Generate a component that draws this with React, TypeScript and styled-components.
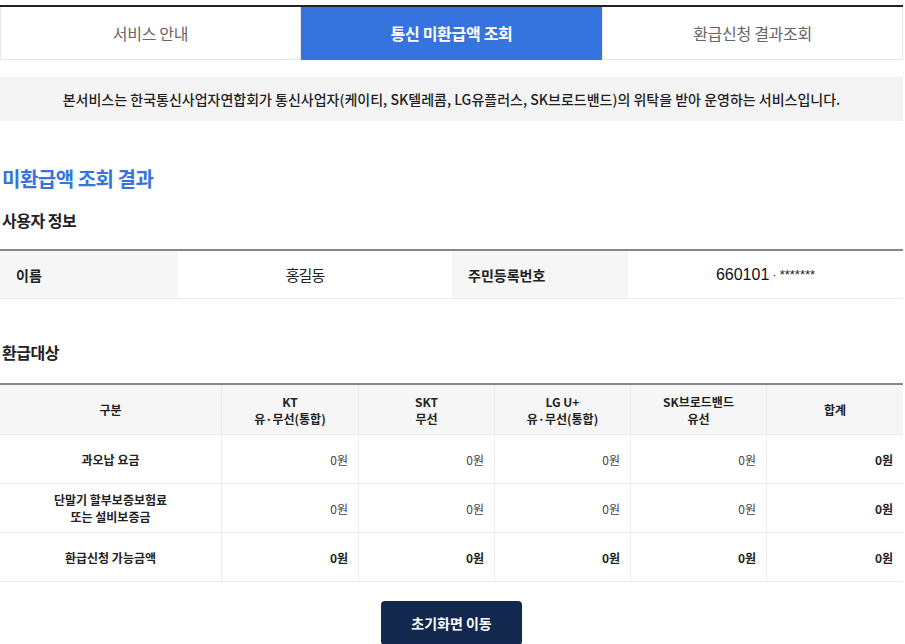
import styled, { createGlobalStyle } from "styled-components";

const GlobalStyle = createGlobalStyle`
  body {
    margin: 0;
    background: #fff;
    font-family: "Noto Sans CJK KR", "Noto Sans", sans-serif;
    color: #222;
  }
`;

const Page = styled.div`
  width: 903px;
  padding-top: 5px;
`;

const TabBar = styled.div`
  display: flex;
  border-top: 2px solid #222;
`;

type ITab = { active?: boolean };
const Tab = styled.div<ITab>`
  flex: 1;
  height: 53px;
  display: flex;
  align-items: center;
  justify-content: center;
  box-sizing: border-box;
  font-size: 16px;
  letter-spacing: -0.3px;
  font-weight: ${(p) => (p.active ? 700 : 400)};
  color: ${(p) => (p.active ? "#fff" : "#666")};
  background: ${(p) => (p.active ? "#3574df" : "#fff")};
  border: 1px solid ${(p) => (p.active ? "#3574df" : "#e6e6e6")};
  border-top: none;
`;

const Notice = styled.div`
  margin-top: 17px;
  height: 44px;
  background: #f4f4f4;
  display: flex;
  align-items: center;
  justify-content: center;
  font-size: 14px;
  font-weight: 500;
  color: #222;
`;

const Title = styled.h2`
  margin: 43px 0 0 2px;
  font-size: 20px;
  font-weight: 700;
  color: #3574df;
  letter-spacing: -0.5px;
`;

type ISub = { gap: number };
const SubTitle = styled.h3<ISub>`
  margin: ${(p) => p.gap}px 0 0 2px;
  font-size: 16px;
  font-weight: 700;
  color: #222;
  letter-spacing: -0.5px;
`;

const InfoTable = styled.div`
  margin-top: 17px;
  display: grid;
  grid-template-columns: 178px 274px 176px 1fr;
  height: 47px;
  border-top: 2px solid #888;
  border-bottom: 1px solid #ececec;
`;

type ICell = { head?: boolean };
const InfoCell = styled.div<ICell>`
  display: flex;
  align-items: center;
  justify-content: ${(p) => (p.head ? "flex-start" : "center")};
  padding-left: ${(p) => (p.head ? "16px" : "0")};
  background: ${(p) => (p.head ? "#f6f6f6" : "#fff")};
  font-size: ${(p) => (p.head ? "14px" : "15px")};
  letter-spacing: ${(p) => (p.head ? "0" : "-1px")};
  font-weight: ${(p) => (p.head ? 700 : 400)};
  color: #222;
`;

const Name = styled.span`
  margin-right: 20px;
`;

const IdNumber = styled.span`
  font-family: "Liberation Sans", Arial, sans-serif;
  font-size: 16px;
  letter-spacing: 0;
  color: #111;
`;

const Stars = styled.span`
  font-family: "Liberation Sans", Arial, sans-serif;
  font-size: 13px;
  letter-spacing: 0;
  margin-left: 3px;
`;

const Table = styled.div`
  margin-top: 19px;
  display: grid;
  grid-template-columns: 222px 137px 136px 136px 136px 1fr;
  border-top: 2px solid #888;
`;

type ITd = { head?: boolean; align?: "center" | "right"; bold?: boolean; last?: boolean };
const Td = styled.div<ITd>`
  height: ${(p) => (p.head ? "50px" : "49px")};
  box-sizing: border-box;
  display: flex;
  align-items: center;
  justify-content: ${(p) => (p.align === "right" ? "flex-end" : "center")};
  text-align: center;
  padding-right: ${(p) => (p.align === "right" ? "10px" : "0")};
  background: ${(p) => (p.head ? "#f6f6f6" : "#fff")};
  border-bottom: 1px solid #ececec;
  border-right: ${(p) => (p.last ? "none" : "1px solid #ececec")};
  font-size: 12px;
  line-height: 17px;
  font-weight: ${(p) => (p.bold ? 700 : 400)};
  color: ${(p) => (p.bold ? "#222" : "#444")};
`;

const ButtonRow = styled.div`
  display: flex;
  justify-content: center;
  margin-top: 19px;
`;

const Button = styled.button`
  width: 141px;
  height: 44px;
  border: none;
  border-radius: 4px;
  background: #13284f;
  color: #fff;
  font-family: "Noto Sans CJK KR", sans-serif;
  font-size: 14px;
  font-weight: 700;
`;

const providers = ["KT\n유·무선(통합)", "SKT\n무선", "LG U+\n유·무선(통합)", "SK브로드밴드\n유선"];
const rows = [
  { label: "과오납 요금", total: false },
  { label: "단말기 할부보증보험료\n또는 설비보증금", total: false },
  { label: "환급신청 가능금액", total: true },
];

const Lines = ({ text }: { text: string }) => (
  <span>
    {text.split("\n").map((t, i) => (
      <div key={i}>{t}</div>
    ))}
  </span>
);

const App = () => {
  return (
    <Page>
      <GlobalStyle />
      <TabBar>
        <Tab>서비스 안내</Tab>
        <Tab active>통신 미환급액 조회</Tab>
        <Tab>환급신청 결과조회</Tab>
      </TabBar>
      <Notice>
        본서비스는 한국통신사업자연합회가 통신사업자(케이티, SK텔레콤, LG유플러스, SK브로드밴드)의 위탁을 받아 운영하는 서비스입니다.
      </Notice>
      <Title>미환급액 조회 결과</Title>
      <SubTitle gap={15}>사용자 정보</SubTitle>
      <InfoTable>
        <InfoCell head>이름</InfoCell>
        <InfoCell>
          <Name>홍길동</Name>
        </InfoCell>
        <InfoCell head>주민등록번호</InfoCell>
        <InfoCell>
          <IdNumber>660101</IdNumber>
          <Stars>·</Stars>
          <Stars>*******</Stars>
        </InfoCell>
      </InfoTable>
      <SubTitle gap={41}>환급대상</SubTitle>
      <Table>
        <Td head bold>
          구분
        </Td>
        {providers.map((p) => (
          <Td key={p} head bold>
            <Lines text={p} />
          </Td>
        ))}
        <Td head bold last>
          합계
        </Td>
        {rows.map((r) => (
          <>
            <Td key={r.label} bold>
              <Lines text={r.label} />
            </Td>
            {providers.map((p) => (
              <Td key={r.label + p} align="right" bold={r.total}>
                0원
              </Td>
            ))}
            <Td align="right" bold last>
              0원
            </Td>
          </>
        ))}
      </Table>
      <ButtonRow>
        <Button>초기화면 이동</Button>
      </ButtonRow>
    </Page>
  );
};

export default App;
